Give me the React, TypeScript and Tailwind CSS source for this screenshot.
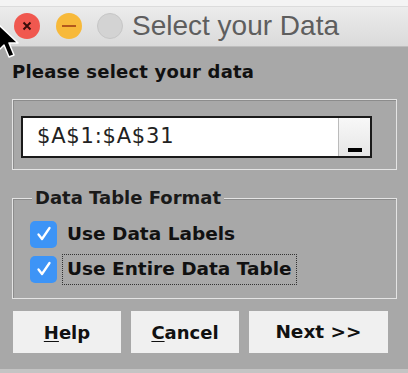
import React from "react";

const font = { fontFamily: '"DejaVu Sans", "Liberation Sans", sans-serif' };

const Check = () => (
  <span className="w-[27px] h-[27px] rounded-[5px] bg-[#3d94f6] flex items-center justify-center shrink-0">
    <svg width="18" height="18" viewBox="0 0 18 18">
      <path d="M3.5 9.5 L7 14 L14.5 3" stroke="white" strokeWidth="2.3" fill="none" strokeLinecap="round" strokeLinejoin="round" />
    </svg>
  </span>
);

const Cursor = () => (
  <svg className="absolute left-[-4px] top-[22px]" width="24" height="40" viewBox="0 0 24 40">
    <path d="M1 1 L1 30 L8 23 L13 35 L18 33 L13 21 L22 21 Z" fill="black" stroke="white" strokeWidth="1.5" strokeLinejoin="round" />
  </svg>
);

export default function App() {
  return (
    <div className="relative w-[408px] h-[373px] overflow-hidden bg-[#a8a8a8] text-[#111]" style={font}>
      {/* top strip */}
      <div className="h-[7px] bg-[#f4f4f4] border-b border-[#dcdcdc]" />

      {/* title bar */}
      <div className="h-[40px] bg-gradient-to-b from-[#ececec] to-[#dadada] border-b border-[#bdbdbd] flex items-center pl-[14px] pb-[2px]">
        <span className="w-[26px] h-[26px] rounded-full bg-[#f0584f] flex items-center justify-center">
          <svg width="12" height="12" viewBox="0 0 12 12">
            <path d="M2.5 2.5 L9.5 9.5 M9.5 2.5 L2.5 9.5" stroke="#3a0d0a" strokeWidth="2" />
          </svg>
        </span>
        <span className="ml-[16px] w-[26px] h-[26px] rounded-full bg-[#f7b93a] flex items-center justify-center">
          <span className="w-[14px] h-[2px] bg-[#b3581c]" />
        </span>
        <span className="ml-[15px] w-[26px] h-[26px] rounded-full bg-[#d3d3d3] border border-[#c6c6c6]" />
        <span className="ml-[9px] text-[28px] leading-none text-[#5e5e5e]" style={{ fontFamily: '"Liberation Sans", sans-serif' }}>
          Select your Data
        </span>
      </div>

      <div className="px-[12px] pt-[16px]">
        <div className="text-[18px] font-bold leading-none tracking-[0.2px]">Please select your data</div>

        {/* range box */}
        <div className="mt-[18px] mr-[-1px] h-[71px] border border-[#e4e4e4] shadow-[inset_1px_1px_0_#8c8c8c] px-[8px] pt-[16px]">
          <div className="flex h-[42px] w-[351px] border-2 border-[#1a1a1a] bg-white">
            <div className="flex-1 flex items-center pl-[14px] text-[21px] tracking-[0.8px] text-[#222]">$A$1:$A$31</div>
            <div className="w-[32px] border-l border-[#bbb] bg-gradient-to-b from-[#f8f8f8] to-[#e6e6e6] flex items-end justify-center pb-[4px]">
              <span className="w-[14px] h-[4px] bg-black" />
            </div>
          </div>
        </div>

        {/* format box */}
        <div className="relative mt-[28px] mr-[-1px] h-[101px] border border-[#e4e4e4] shadow-[inset_1px_1px_0_#8c8c8c] pl-[17px] pt-[21px]">
          <div className="absolute left-[19px] top-[-13px] px-[3px] bg-[#a8a8a8] text-[18px] leading-[24px] font-semibold text-[#1a1a1a]">Data Table Format</div>
          <div className="flex items-center gap-[10px] h-[28px]">
            <Check />
            <span className="text-[18.5px] font-semibold">Use Data Labels</span>
          </div>
          <div className="flex items-center gap-[5px] h-[28px] mt-[7px]">
            <Check />
            <span className="text-[18.5px] font-semibold border border-dotted border-[#333] px-[4px] h-[31px] flex items-center">
              Use Entire Data Table
            </span>
          </div>
        </div>

        {/* buttons */}
        <div className="mt-[12px] flex gap-[10px] ml-[1px]">
          <button className="w-[108px] h-[42px] bg-[#f0f0f0] text-[18px] font-semibold flex items-center justify-center">
            <span><span className="underline underline-offset-2">H</span>elp</span>
          </button>
          <button className="w-[108px] h-[42px] bg-[#f0f0f0] text-[18px] font-semibold flex items-center justify-center">
            <span><span className="underline underline-offset-2">C</span>ancel</span>
          </button>
          <button className="w-[139px] h-[42px] bg-[#f0f0f0] text-[18.5px] font-semibold flex items-center justify-center">
            Next &gt;&gt;
          </button>
        </div>
      </div>

      <div className="absolute left-0 right-0 bottom-0 h-[4px] bg-[#c4c4c4]" />
      <Cursor />
    </div>
  );
}
